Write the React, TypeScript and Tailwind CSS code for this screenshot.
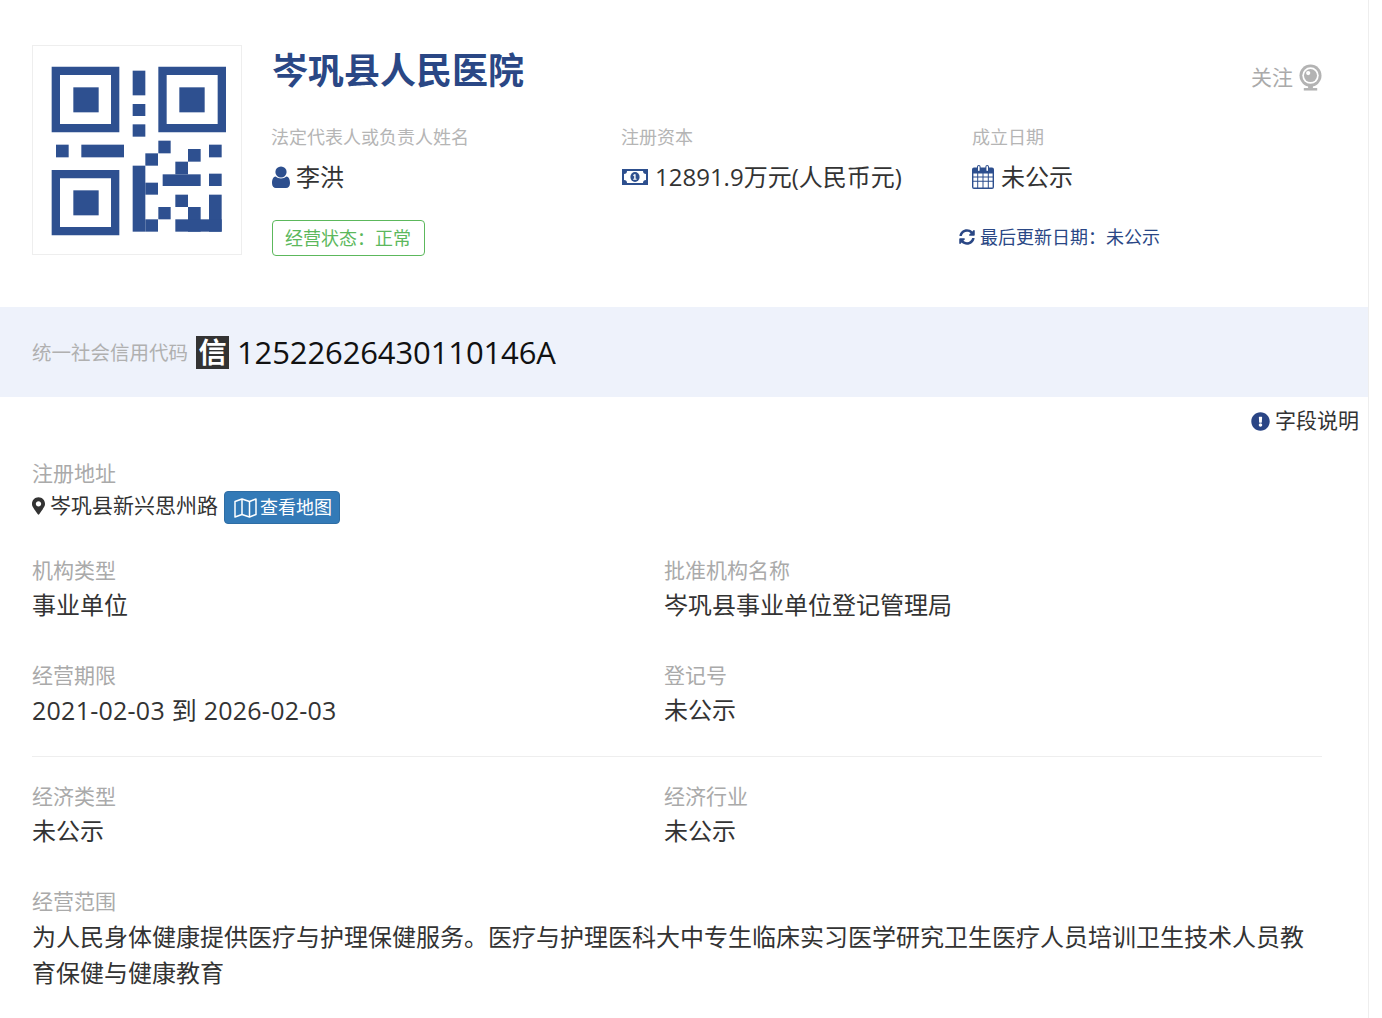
import React from "react";
import { FaSyncAlt, FaExclamationCircle, FaMapMarkerAlt } from "react-icons/fa";

const finder = (x: number, y: number, w: number, h: number, ix: number, iy: number) => (
  <g key={`${x}-${y}`}>
    <path fillRule="evenodd" d={`M${x} ${y}h${w}v${h}h-${w}zM${x + 25} ${y + 25}v${h - 50}h${w - 50}v-${h - 50}z`} />
    <rect x={ix} y={iy} width={76} height={75} />
  </g>
);
const cells: [number, number, number, number][] = [
  [338, 122, 376, 196], [338, 222, 376, 258], [338, 283, 376, 320], [108, 344, 146, 382], [184, 344, 312, 382],
  [415, 332, 452, 370], [376, 370, 414, 407], [504, 357, 542, 395], [567, 344, 605, 382], [466, 395, 504, 433],
  [428, 433, 542, 468], [567, 431, 605, 468], [338, 407, 376, 605], [376, 458, 414, 494], [376, 568, 414, 605],
  [466, 494, 504, 531], [415, 531, 452, 568], [567, 494, 605, 605], [504, 531, 542, 605], [466, 568, 605, 605],
];

function Qr() {
  return (
    <svg viewBox="39 48 624 624" className="w-[210px] h-[210px] shrink-0 border border-[#eeeeee] bg-white" fill="#2e5090">
      {finder(95, 110, 203, 197, 160, 172)}
      {finder(415, 110, 203, 197, 478, 172)}
      {finder(95, 420, 203, 196, 160, 481)}
      {cells.map(([a, b, c, d]) => <rect key={`${a}${b}`} x={a} y={b} width={c - a} height={d - b} />)}
    </svg>
  );
}

function Money() {
  return (
    <svg viewBox="0 0 26 16" className="w-[26px] h-[16px]">
      <rect width="26" height="16" fill="#2d4f8e" />
      <path d="M5 2h16a3 3 0 0 0 3 3v6a3 3 0 0 0-3 3H5a3 3 0 0 0-3-3V5a3 3 0 0 0 3-3z" fill="#fff" />
      <ellipse cx="13" cy="8" rx="4.6" ry="5" fill="#2d4f8e" />
      <path d="M12 5.2h1.6v4.6h1v1h-3.4v-1h1V6.6l-1 .6v-1z" fill="#fff" />
    </svg>
  );
}

function UserIcon() {
  return (
    <svg viewBox="0 0 18 22" className="w-[18px] h-[22px]" fill="#2d4f8e">
      <circle cx="9" cy="6" r="5.6" />
      <path d="M3.6 10.4C5 11.7 6.9 12.4 9 12.4s4-.7 5.4-2c2.4.2 3.6 2.8 3.6 6.6 0 3.2-1.7 5-4 5H4c-2.3 0-4-1.8-4-5 0-3.8 1.2-6.4 3.6-6.6z" />
    </svg>
  );
}

function MapIcon() {
  return (
    <svg viewBox="0 0 23 20" className="w-[23px] h-[20px]" fill="none" stroke="#fff" strokeWidth="1.5" strokeLinejoin="round">
      <path d="M1 3.5 8 1l7.5 2.5L22 1v15.5L15.5 19 8 16.5 1 19z" />
      <path d="M8 1v15.5M15.500 3.5V19" />
    </svg>
  );
}

function Calendar() {
  return (
    <svg viewBox="0 0 22 24" className="w-[22px] h-[24px]" fill="#2d4f8e">
      <path fillRule="evenodd" d="M5 2.5V1.8a1.8 1.8 0 0 1 3.6 0v.7h4.8v-.7a1.8 1.8 0 0 1 3.6 0v.7h3A2 2 0 0 1 22 4.5V22a2 2 0 0 1-2 2H2a2 2 0 0 1-2-2V4.5a2 2 0 0 1 2-2zM6 1.8v3.4a.8.8 0 0 0 1.6 0V1.8a.8.8 0 0 0-1.6 0zm8.4 0v3.4a.8.8 0 0 0 1.6 0V1.8a.8.8 0 0 0-1.6 0zM1.4 8.6v3h3.8v-3zm4.8 0v3h4.3v-3zm5.3 0v3h4.3v-3zm5.3 0v3h3.8v-3zM1.4 12.6v3.2h3.8v-3.2zm4.8 0v3.2h4.3v-3.2zm5.3 0v3.2h4.3v-3.2zm5.3 0v3.2h3.8v-3.2zM1.4 16.8v5.8h3.8v-5.8zm4.8 0v5.8h4.3v-5.8zm5.3 0v5.8h4.3v-5.8zm5.3 0v5.8h3.8v-5.8z" />
    </svg>
  );
}

function Webcam() {
  return (
    <svg viewBox="0 0 24 28" className="w-[23px] h-[27px]" fill="#b3b3b3">
      <circle cx="12" cy="12" r="11.5" />
      <circle cx="12" cy="12" r="8.6" fill="#fff" />
      <circle cx="12" cy="12" r="6.8" />
      <circle cx="9.6" cy="9.4" r="2.2" fill="#fff" />
      <rect x="9.5" y="22" width="5" height="3" />
      <rect x="5" y="25" width="14" height="2.6" />
    </svg>
  );
}

function Field({ label, value, className = "" }: { label: string; value: React.ReactNode; className?: string }) {
  return (
    <div className={className}>
      <div className="text-[21px] leading-[28px] text-[#aaaaaa]">{label}</div>
      <div className="text-[24px] leading-[36px] text-[#333333] mt-[3px]">{value}</div>
    </div>
  );
}

function Summary({ label, icon, value, className, labelClass = "" }: { label: string; icon: React.ReactNode; value: string; className: string; labelClass?: string }) {
  return (
    <div className={className}>
      <div className={`text-[18px] leading-[26px] text-[#b5b5b5] ${labelClass}`}>{label}</div>
      <div className="flex items-center h-[36px] mt-[9px] text-[24px] text-[#333333]">{icon}{value}</div>
    </div>
  );
}

export default function App() {
  return (
    <div
      className="w-[1369px] h-[1018px] overflow-hidden bg-white border-r border-[#eeeeee] text-[#333333]"
      style={{ fontFamily: '"Open Sans","Noto Sans CJK SC",sans-serif' }}
    >
      <header className="flex h-[307px] pl-[32px] pr-[46px] pt-[45px]">
        <Qr />
        <div className="ml-[30px] mt-[1px] flex-1 min-w-0">
          <div className="flex justify-between items-start">
            <h1 className="text-[36px] leading-[50px] font-bold text-[#2a4785]">岑巩县人民医院</h1>
            <div className="flex items-center text-[21px] text-[#aaaaaa] mt-[16px]">关注<span className="ml-[6px]"><Webcam /></span></div>
          </div>
          <div className="flex mt-[28px]">
            <Summary className="w-[350px]" labelClass="-ml-[1px]" label="法定代表人或负责人姓名" icon={<span className="mr-[6px] flex"><UserIcon /></span>} value="李洪" />
            <Summary className="w-[350px]" labelClass="-ml-[1px]" label="注册资本" icon={<span className="mr-[7px] flex"><Money /></span>} value="12891.9万元(人民币元)" />
            <Summary className="flex-1" label="成立日期" icon={<span className="mr-[7px] flex"><Calendar /></span>} value="未公示" />
          </div>
          <div className="flex items-center mt-[25px]">
            <div className="w-[687px]">
              <span className="inline-block h-[36px] leading-[34px] pl-[12px] pr-[13px] text-[18px] text-[#5cb85c] border border-[#5cb85c] rounded-[4px]">经营状态：正常</span>
            </div>
            <div className="flex items-center text-[18px] text-[#2a4785] mb-[2px]">
              <FaSyncAlt className="w-[16px] h-[16px] mr-[5px]" />最后更新日期：未公示
            </div>
          </div>
        </div>
      </header>

      <section className="flex items-center h-[90px] pl-[32px] bg-[#eef2fb]">
        <span className="text-[19.5px] text-[#b0b0b0] mt-[2px]">统一社会信用代码</span>
        <span className="ml-[8px] w-[33px] h-[33px] flex items-center justify-center bg-[#333333] text-white text-[28px] leading-none font-bold">信</span>
        <span className="ml-[8px] text-[31px] tracking-[-0.12px] text-[#111111]">12522626430110146A</span>
      </section>

      <div className="flex justify-end items-center h-[48px] pr-[9px] text-[21px]">
        <FaExclamationCircle className="w-[19px] h-[19px] mr-[5px]" style={{ color: "#2a4585" }} />字段说明
      </div>

      <main className="pl-[32px] pr-[46px]">
        <div className="mt-[14px]">
          <div className="text-[21px] leading-[28px] text-[#aaaaaa]">注册地址</div>
          <div className="flex items-center h-[33px] text-[21px] mt-[2px]">
            <FaMapMarkerAlt className="w-[13px] h-[18px] mr-[5px] text-[#333333]" />岑巩县新兴思州路
            <span className="ml-[6px] mt-[4px] inline-flex items-center h-[33px] pl-[9px] pr-[7px] rounded-[4px] bg-[#337ab7] border border-[#2e6da4] text-white text-[18px]">
              <span className="mr-[3px] flex"><MapIcon /></span>查看地图
            </span>
          </div>
        </div>
        <div className="grid grid-cols-[632px_1fr] mt-[34px] gap-y-[38px]">
          <Field label="机构类型" value="事业单位" />
          <Field label="批准机构名称" value="岑巩县事业单位登记管理局" />
          <Field label="经营期限" value={<span className="text-[25px] tracking-[0.25px]">2021-02-03 到 2026-02-03</span>} />
          <Field label="登记号" value="未公示" />
        </div>
        <div className="border-t border-[#eeeeee] mt-[27px] pt-[25px] grid grid-cols-[632px_1fr] gap-y-[38px]">
          <Field label="经济类型" value="未公示" />
          <Field label="经济行业" value="未公示" />
          <div className="col-span-2">
            <div className="text-[21px] leading-[28px] text-[#aaaaaa]">经营范围</div>
            <div className="text-[24px] leading-[36px] mt-[4px]">为人民身体健康提供医疗与护理保健服务。医疗与护理医科大中专生临床实习医学研究卫生医疗人员培训卫生技术人员教育保健与健康教育</div>
          </div>
        </div>
      </main>
    </div>
  );
}
